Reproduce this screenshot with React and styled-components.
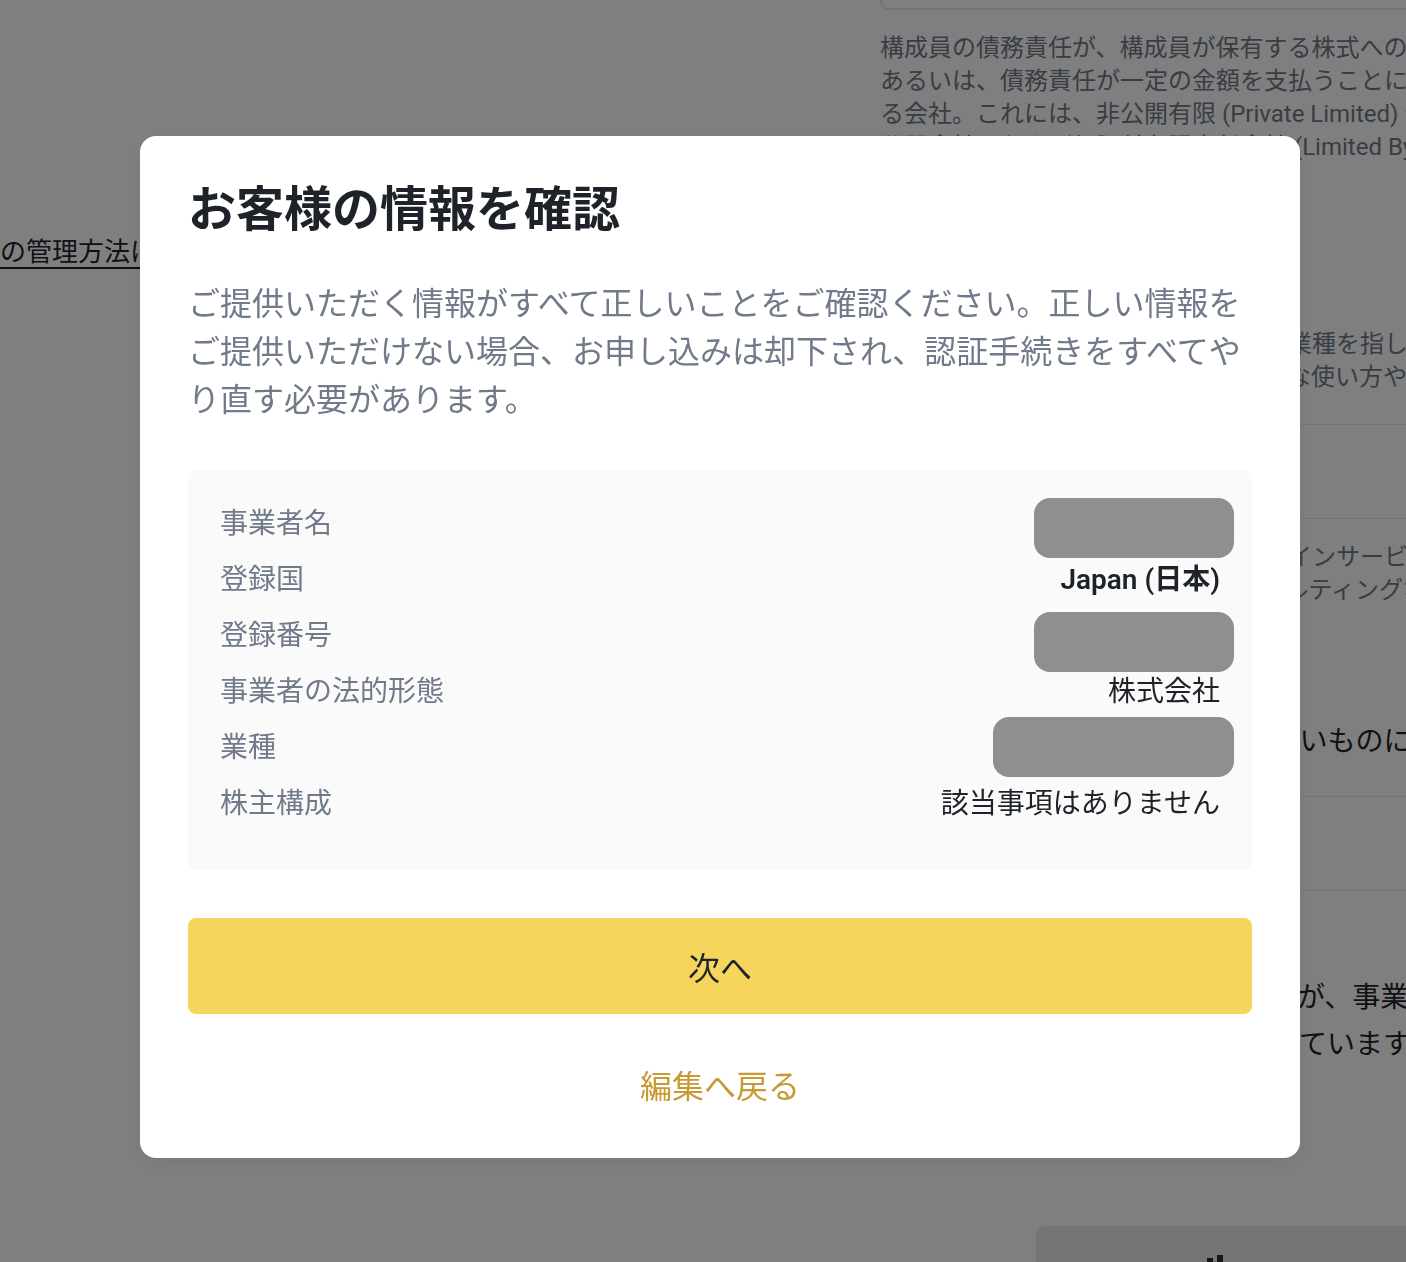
import React from 'react';
import styled, { createGlobalStyle } from 'styled-components';

const GlobalStyle = createGlobalStyle`
  html, body {
    margin: 0;
    padding: 0;
    background: #ffffff;
    overflow: hidden;
  }
  body {
    font-family: "Roboto", "Noto Sans CJK JP", "Noto Sans", sans-serif;
    color: #1e2329;
  }
  * { box-sizing: border-box; }
`;

// 확인 모달에 표시되는 항목들 (값이 가려진 항목은 redact)
const rows = [
  { label: '事業者名', redact: { top: -6, width: 200 } },
  { label: '登録国', value: 'Japan (日本)', strong: true },
  { label: '登録番号', redact: { top: -4, width: 200 } },
  { label: '事業者の法的形態', value: '株式会社' },
  { label: '業種', redact: { top: -11, width: 241 } },
  { label: '株主構成', value: '該当事項はありません' },
];

const App = () => {
  return (
    <>
      <GlobalStyle />
      <Page>
        <LeftCol>
          <BgLink>の管理方法について詳しくはこちら</BgLink>
        </LeftCol>

        <RightCol>
          <TopCard />
          <BgPara mt={22}>
            <Line>構成員の債務責任が、構成員が保有する株式への未払い額に限定</Line>
            <Line>あるいは、債務責任が一定の金額を支払うことに同意した額に限定</Line>
            <Line>る会社。これには、非公開有限 (Private Limited) 会社、</Line>
            <Line>公開会社、および保証付有限責任会社 (Limited By Guarantee)</Line>
          </BgPara>
          <BgHeading mt={60}>業種</BgHeading>
          <BgPara mt={64}>
            <Line>主に特定の業界に限定されない幅広い業種を指します。</Line>
            <Line>お客様の事業の目的と、資金の一般的な使い方や用途</Line>
          </BgPara>
          <Divider mt={30} />
          <BgSection>その他</BgSection>
          <Divider />
          <BgPara mt={22}>
            <Line>例えば、ソフトウェア開発業、オンラインサービス、</Line>
            <Line>マーケティング、教育、小売、コンサルティングなど。</Line>
          </BgPara>
          <BgHeading mt={115}>上記のカテゴリーに当てはまらないものについて</BgHeading>
          <Divider mt={34} />
          <BgSection>その他</BgSection>
          <Divider />
          <BgDark>
            <Line>事業の運営に関するすべての情報が、事業者の責任において</Line>
            <Line>正確であることを確認し、同意しています。</Line>
          </BgDark>
          <BottomCard>
            <Bars>
              <Bar h={4} />
              <Bar h={1} />
            </Bars>
          </BottomCard>
        </RightCol>
      </Page>

      <Overlay>
        <Modal>
          <Title>お客様の情報を確認</Title>
          <Desc>
            ご提供いただく情報がすべて正しいことをご確認ください。正しい情報をご提供いただけない場合、お申し込みは却下され、認証手続きをすべてやり直す必要があります。
          </Desc>

          <InfoBox>
            {rows.map((row) => (
              <Row key={row.label}>
                <Label>{row.label}</Label>
                <Value strong={row.strong}>
                  {row.value}
                  {row.redact && (
                    <Redacted top={row.redact.top} width={row.redact.width} />
                  )}
                </Value>
              </Row>
            ))}
          </InfoBox>

          <PrimaryBtn>次へ</PrimaryBtn>
          <BackLink>編集へ戻る</BackLink>
        </Modal>
      </Overlay>
    </>
  );
};

/////* background page */////

const Page = styled.div`
  display: flex;
  width: 1406px;
  height: 1262px;
  overflow: hidden;
`;

const LeftCol = styled.div`
  width: 880px;
  flex-shrink: 0;
  padding-top: 234px;
`;

const BgLink = styled.a`
  display: block;
  font-size: 26px;
  line-height: 36px;
  color: #1e2329;
  text-decoration: underline;
  text-underline-offset: 6px;
  white-space: nowrap;
`;

const RightCol = styled.div`
  width: 640px;
  flex-shrink: 0;
  display: flex;
  flex-direction: column;
  & > * {
    flex-shrink: 0;
  }
`;

const TopCard = styled.div`
  margin-top: -40px;
  height: 50px;
  width: 600px;
  border: 2px solid #e6e8ea;
  border-radius: 8px;
`;

const BgPara = styled.div`
  margin-top: ${(p) => p.mt}px;
  font-size: 24px;
  line-height: 33px;
  color: #707a8a;
`;

const Line = styled.div`
  white-space: nowrap;
`;

const BgHeading = styled.div`
  margin-top: ${(p) => p.mt}px;
  font-size: 28px;
  line-height: 40px;
  color: #1e2329;
  white-space: nowrap;
`;

const Divider = styled.div`
  margin-top: ${(p) => p.mt || 0}px;
  height: 1px;
  background: #e6e8ea;
`;

const BgSection = styled.div`
  height: 93px;
  display: flex;
  align-items: center;
  font-size: 24px;
  color: #1e2329;
`;

const BgDark = styled.div`
  margin-top: 83px;
  font-size: 28px;
  line-height: 47px;
  color: #1e2329;
`;

const BottomCard = styled.div`
  margin-top: 158px;
  margin-left: 156px;
  height: 100px;
  background: #eaeaea;
  border-radius: 8px;
  padding: 28px 0 0 171px;
`;

const Bars = styled.div`
  display: flex;
  align-items: flex-start;
  gap: 4px;
`;

const Bar = styled.span`
  width: 6px;
  height: 20px;
  margin-top: ${(p) => p.h}px;
  background: #2b2f36;
`;

/////* modal */////

const Overlay = styled.div`
  position: fixed;
  inset: 0;
  background: rgba(0, 0, 0, 0.5);
  display: flex;
  align-items: flex-start;
  padding: 136px 0 0 140px;
`;

const Modal = styled.div`
  width: 1160px;
  background: #ffffff;
  border-radius: 16px;
  padding: 42px 48px 47px;
  display: flex;
  flex-direction: column;
  box-shadow: 0 6px 16px rgba(0, 0, 0, 0.06);
`;

const Title = styled.h2`
  margin: 0;
  font-size: 48px;
  line-height: 64px;
  font-weight: 700;
  color: #1e2329;
`;

const Desc = styled.p`
  margin: 38px 0 0;
  font-size: 32px;
  line-height: 48px;
  color: #707a8a;
`;

const InfoBox = styled.div`
  margin-top: 46px;
  background: #fafafa;
  border-radius: 8px;
  padding: 34px 32px 30px;
`;

const Row = styled.div`
  display: flex;
  justify-content: space-between;
  align-items: center;
  height: 40px;
  margin-bottom: 16px;
  font-size: 28px;
  line-height: 40px;
`;

const Label = styled.span`
  color: #707a8a;
`;

const Value = styled.span`
  position: relative;
  color: #1e2329;
  font-weight: ${(p) => (p.strong ? 600 : 400)};
  min-width: 10px;
  min-height: 40px;
`;

const Redacted = styled.span`
  position: absolute;
  right: -14px;
  top: ${(p) => p.top}px;
  width: ${(p) => p.width}px;
  height: 60px;
  background: #8f8f8f;
  border-radius: 16px;
`;

const PrimaryBtn = styled.button`
  margin-top: 48px;
  height: 96px;
  border: none;
  border-radius: 8px;
  background: #f6d55c;
  color: #1e2329;
  font-family: inherit;
  font-size: 32px;
  cursor: pointer;
`;

const BackLink = styled.a`
  margin-top: 49px;
  align-self: center;
  font-size: 32px;
  line-height: 48px;
  color: #c99a33;
  cursor: pointer;
`;

export default App;
